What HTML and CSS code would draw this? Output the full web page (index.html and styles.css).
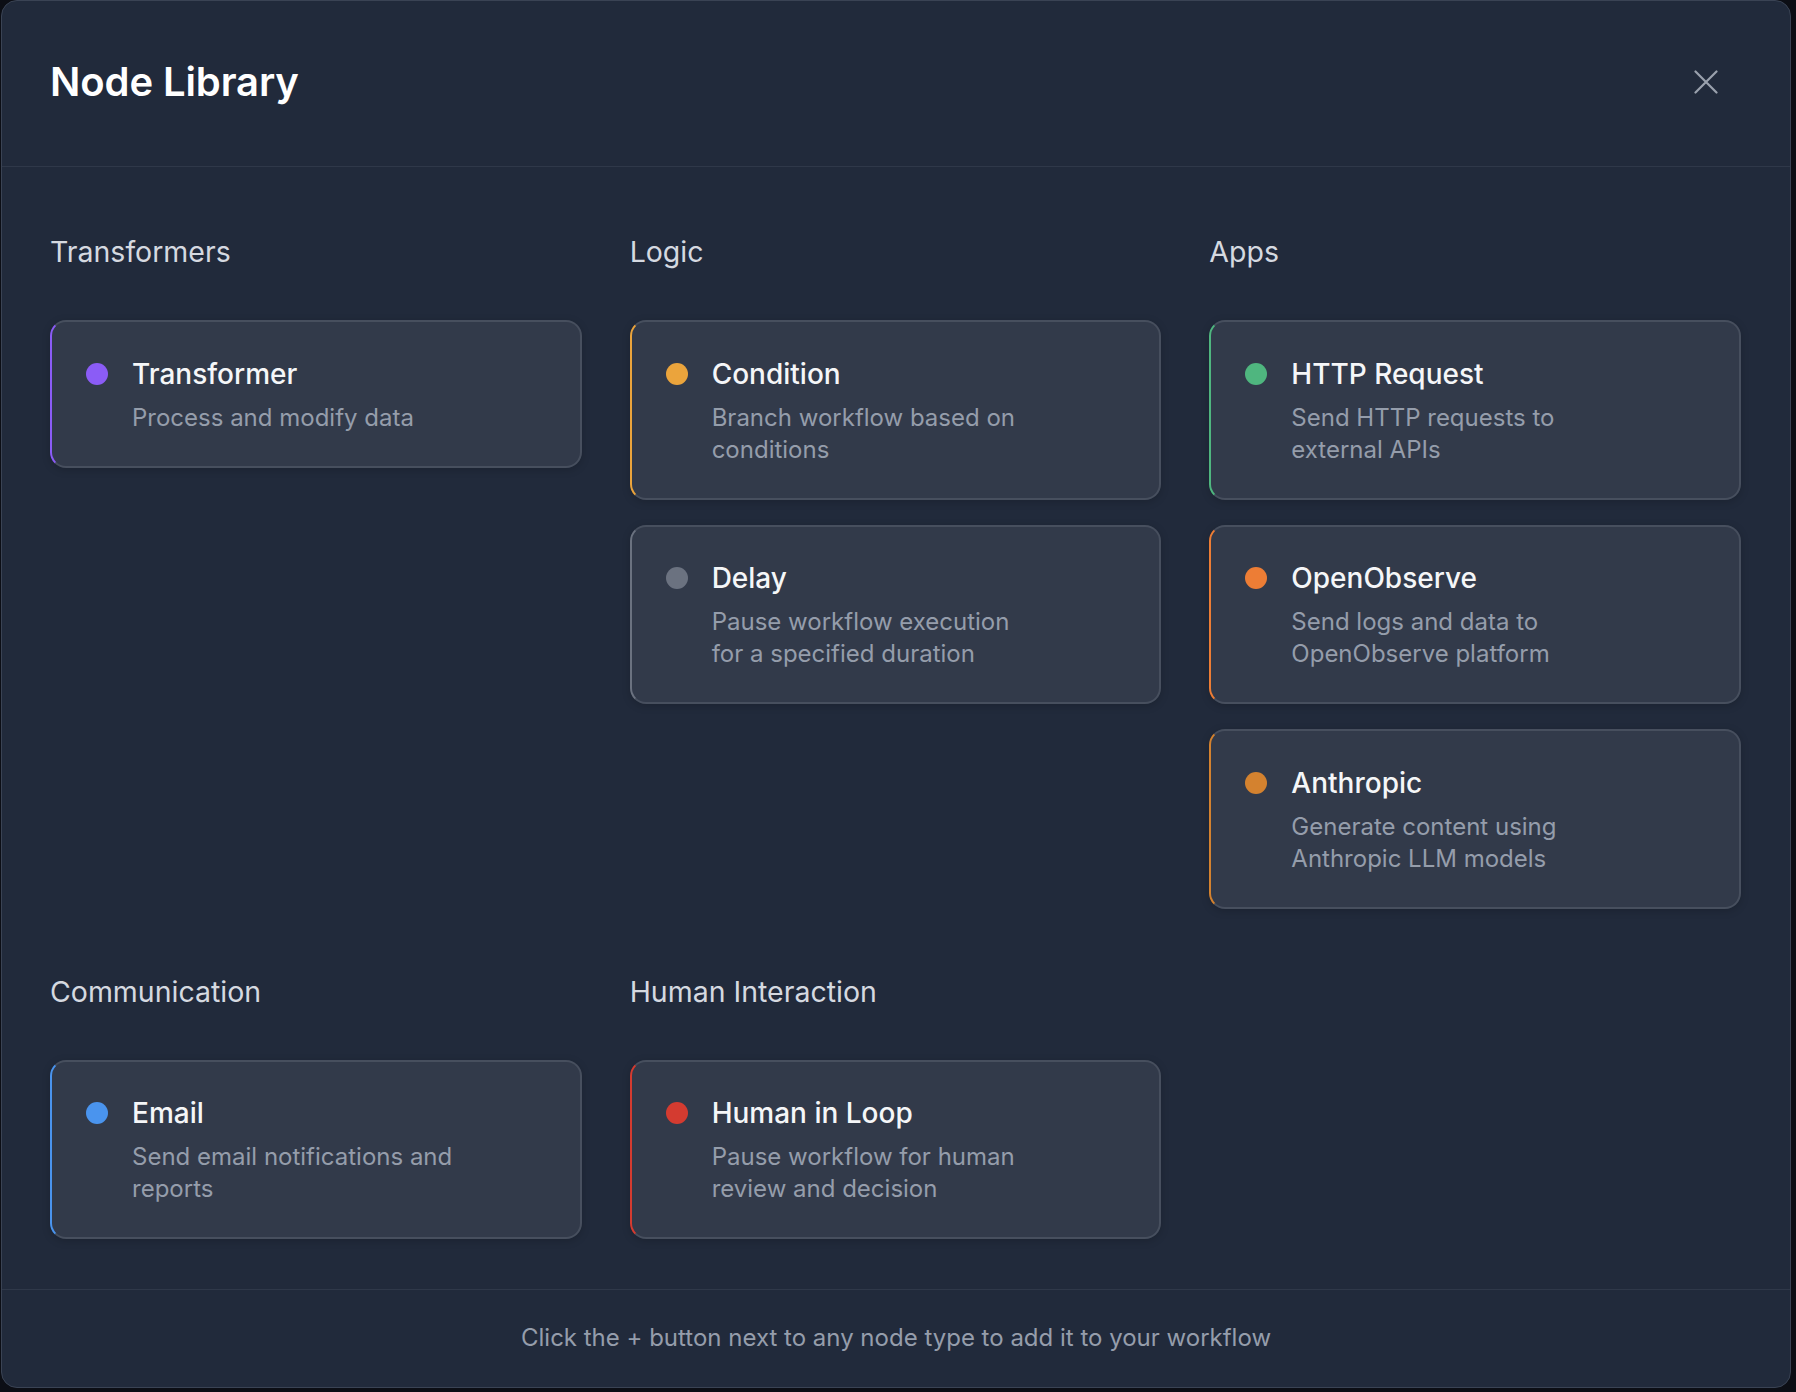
FILE: index.html
```html
<!DOCTYPE html>
<html lang="en">
<head>
<meta charset="utf-8">
<title>Node Library</title>
<link rel="stylesheet" href="styles.css">
</head>
<body>
<div class="modal">
  <header class="modal-header">
    <h1 class="modal-title">Node Library</h1>
    <button class="close-btn" aria-label="Close">
      <svg viewBox="0 0 24 24" width="24" height="24" fill="none" stroke="currentColor" stroke-width="2.2" stroke-linecap="round"><path d="M1.5 1.5 22.5 22.5M22.5 1.5 1.5 22.5"/></svg>
    </button>
  </header>
  <main class="modal-body">
    <div class="grid">
      <section class="section">
        <h2 class="section-title">Transformers</h2>
        <div class="cards">
          <div class="card c-purple"><span class="dot"></span><div class="info"><div class="name">Transformer</div><div class="desc">Process and modify data</div></div></div>
        </div>
      </section>
      <section class="section">
        <h2 class="section-title">Logic</h2>
        <div class="cards">
          <div class="card c-amber"><span class="dot"></span><div class="info"><div class="name">Condition</div><div class="desc">Branch workflow based on conditions</div></div></div>
          <div class="card c-gray"><span class="dot"></span><div class="info"><div class="name">Delay</div><div class="desc">Pause workflow execution for a specified duration</div></div></div>
        </div>
      </section>
      <section class="section">
        <h2 class="section-title">Apps</h2>
        <div class="cards">
          <div class="card c-green"><span class="dot"></span><div class="info"><div class="name">HTTP Request</div><div class="desc">Send HTTP requests to external APIs</div></div></div>
          <div class="card c-orange"><span class="dot"></span><div class="info"><div class="name">OpenObserve</div><div class="desc">Send logs and data to OpenObserve platform</div></div></div>
          <div class="card c-copper"><span class="dot"></span><div class="info"><div class="name">Anthropic</div><div class="desc">Generate content using Anthropic LLM models</div></div></div>
        </div>
      </section>
      <section class="section">
        <h2 class="section-title">Communication</h2>
        <div class="cards">
          <div class="card c-blue"><span class="dot"></span><div class="info"><div class="name">Email</div><div class="desc">Send email notifications and reports</div></div></div>
        </div>
      </section>
      <section class="section">
        <h2 class="section-title">Human Interaction</h2>
        <div class="cards">
          <div class="card c-red"><span class="dot"></span><div class="info"><div class="name">Human in Loop</div><div class="desc">Pause workflow for human review and decision</div></div></div>
        </div>
      </section>
    </div>
  </main>
  <footer class="modal-footer">Click the + button next to any node type to add it to your workflow</footer>
</div>
</body>
</html>
```

FILE: styles.css
```css
* { box-sizing: border-box; }
html, body { margin: 0; padding: 0; }
body {
  background: #0c0e15;
  font-family: Inter, "Noto Sans", "Liberation Sans", sans-serif;
  padding: 0 4px 4px 1px;
}
.modal {
  width: 1790px;
  height: 1388px;
  background: #212a3b;
  border: 1px solid #3a4354;
  border-radius: 16px;
  display: flex;
  flex-direction: column;
  overflow: hidden;
}
.modal-header {
  height: 166px;
  flex: none;
  display: flex;
  align-items: center;
  justify-content: space-between;
  padding: 0 49px 4px 48px;
  border-bottom: 1px solid #2f3849;
}
.modal-title {
  margin: 0;
  font-size: 40px;
  line-height: 48px;
  font-weight: 600;
  color: #ffffff;
  letter-spacing: -0.1px;
}
.close-btn {
  background: none;
  border: none;
  padding: 0;
  margin-right: 23px;
  color: #9aa1ad;
  display: flex;
}
.modal-body {
  flex: 1;
  padding: 64px 49px 0 48px;
}
.grid {
  display: grid;
  grid-template-columns: repeat(3, 1fr);
  column-gap: 48px;
  row-gap: 62px;
  align-items: start;
}
.section-title {
  margin: 0 0 48px;
  padding-top: 1px;
  font-size: 28.5px;
  line-height: 40px;
  font-weight: 400;
  color: #d5d9e0;
}
.cards {
  display: flex;
  flex-direction: column;
  gap: 25px;
}
.card {
  display: flex;
  align-items: flex-start;
  gap: 24px;
  padding: 31.5px 32px 32px 34px;
  background: #323a4a;
  border: 2px solid #474f5e;
  border-radius: 16px;
  box-shadow: 0 2px 8px rgba(0, 0, 0, 0.18);
}
.dot {
  flex: none;
  width: 22px;
  height: 22px;
  border-radius: 50%;
  margin-top: 9px;
}
.name {
  font-size: 28px;
  line-height: 40px;
  font-weight: 500;
  color: #f5f6f8;
}
.desc {
  margin-top: 8px;
  font-size: 24px;
  line-height: 32px;
  color: #959dab;
  max-width: 328px;
}
.c-purple { border-left-color: #8b5cf6; }
.c-purple .dot { background: #8b5cf6; }
.c-amber { border-left-color: #eba43c; }
.c-amber .dot { background: #eba43c; }
.c-gray { border-left-color: #6b7280; }
.c-gray .dot { background: #6b7280; }
.c-green { border-left-color: #4fb67f; }
.c-green .dot { background: #4fb67f; }
.c-orange { border-left-color: #ed7d35; }
.c-orange .dot { background: #ed7d35; }
.c-copper { border-left-color: #d4822f; }
.c-copper .dot { background: #d4822f; }
.c-blue { border-left-color: #4a94ee; }
.c-blue .dot { background: #4a94ee; }
.c-red { border-left-color: #d43b30; }
.c-red .dot { background: #d43b30; }
.modal-footer {
  flex: none;
  height: 98px;
  border-top: 1px solid #2f3849;
  display: flex;
  align-items: center;
  justify-content: center;
  font-size: 24px;
  color: #959dab;
  padding-bottom: 2px;
}
```
